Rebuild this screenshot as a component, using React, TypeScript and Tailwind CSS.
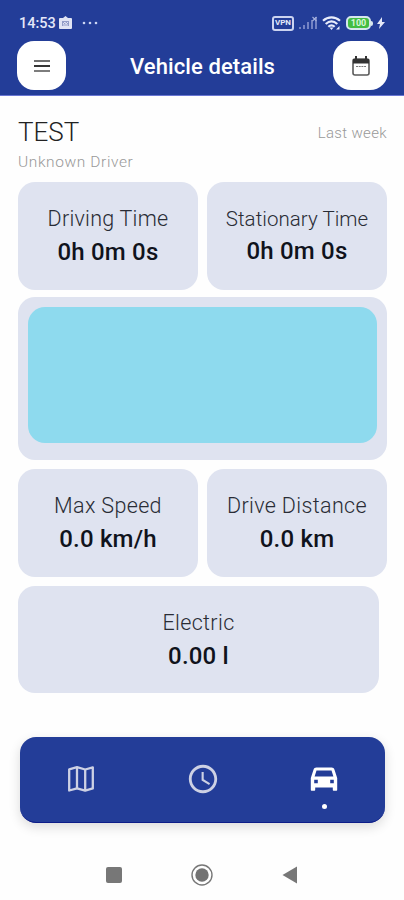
import type { ReactNode } from 'react'
import { MdAccessTime } from 'react-icons/md'

type StatCardProps = {
  label: string
  value: string
  labelClass?: string
  valueClass?: string
}

function StatCard({
  label,
  value,
  labelClass = 'text-[21.5px] tracking-[0.35px]',
  valueClass = 'mt-[1px]',
}: StatCardProps) {
  return (
    <div className="flex h-full flex-col items-center rounded-[17px] bg-[#dfe3f0] pt-[21px] whitespace-nowrap">
      <div className={`leading-[32px] font-light text-[#292c35] ${labelClass}`}>{label}</div>
      <div className={`text-[24px] leading-[33px] font-medium tracking-[0.2px] text-[#10131c] ${valueClass}`}>
        {value}
      </div>
    </div>
  )
}

function StatusBar() {
  return (
    <div className="flex h-[41px] items-center pt-[5px] pl-[19px] text-[#e4e8f8]">
      <span className="w-[39px] pt-[2px] text-[14.5px] leading-none font-medium">14:53</span>
      <svg width="15" height="14" viewBox="0 0 15 14">
        <path d="M2 2h3l2.5-2L10 2h3a1 1 0 0 1 1 1v9a1 1 0 0 1-1 1H2a1 1 0 0 1-1-1V3a1 1 0 0 1 1-1z" fill="#e0e4f4" />
        <path d="M4 5h7v5H4z" fill="#929dc8" />
        <path d="M5 8l2-2 1 2 2-2M5 9h5" stroke="#dfe3f4" fill="none" />
      </svg>
      <svg className="ml-[9px]" width="17" height="4" viewBox="0 0 17 4" fill="#ccd5f3">
        <circle cx="2" cy="2" r="1.3" />
        <circle cx="8" cy="2" r="1.3" />
        <circle cx="14" cy="2" r="1.3" />
      </svg>

      <div className="mr-[19px] ml-auto flex items-center">
        <div className="flex h-[15px] w-[22px] items-center justify-center rounded-[3px] border-2 border-[#cbd3f0] text-[8px] leading-none font-bold">
          VPN
        </div>
        <svg className="ml-[4px]" width="20" height="14" viewBox="0 0 20 14">
          <path d="M2 13v-2M6 13V9M10 13V6M14 13V4M18 13V1" stroke="#7483c4" strokeWidth="2" />
          <path d="M14.500 1l4 4M18.500 1l-4 4" stroke="#a4afdc" strokeWidth="1.100" />
        </svg>
        <svg className="ml-[4px]" width="19" height="15" viewBox="0 0 19 15">
          <g fill="none" stroke="#e8ecfb" strokeWidth="2.200">
            <path d="M1 4.800c5-4.600 12-4.600 17 0" />
            <path d="M3.700 8c3.600-3.300 8-3.300 11.600 0" />
            <path d="M6.300 10.800c2-1.800 4.400-1.800 6.400 0" />
          </g>
          <path d="M7.500 11.500h4l-2 2.500zM14 13.500l3.500-3.500v3.500z" fill="#e8ecfb" />
        </svg>
        <div className="ml-[5px] flex h-[14px] w-[25px] items-center justify-center rounded-[5px] border-2 border-[#d6e6ed] bg-[#43bd43] text-[9px] leading-none font-bold text-[#daf7da]">
          100
        </div>
        <div className="h-[5px] w-[2px] rounded-r-sm bg-[#d6e6ed]" />
        <svg className="ml-[4px]" width="8" height="12" viewBox="0 0 8 12">
          <path d="M5 0L0 7h3L2 12l6-7H5z" fill="#e4e8f8" />
        </svg>
      </div>
    </div>
  )
}

function Header() {
  return (
    <header className="h-[96px] border-b border-[#6976d3] bg-[#233d98]">
      <StatusBar />
      <div className="grid h-[49px] grid-cols-[55px_1fr_55px] items-center pr-[16px] pl-[17px]">
        <button className="flex h-[49px] w-[49px] items-center justify-center rounded-[17px] bg-white">
          <svg width="18" height="14" viewBox="0 0 18 14">
            <path d="M1 2h16" stroke="#555" strokeWidth="1.700" />
            <path d="M1 7h16" stroke="#111" strokeWidth="1.700" />
            <path d="M1 12h16" stroke="#666" strokeWidth="1.700" />
          </svg>
        </button>
        <h1 className="pt-[2px] text-center text-[22px] leading-[47px] font-medium tracking-[0.1px] whitespace-nowrap text-white">
          Vehicle details
        </h1>
        <button className="flex h-[49px] w-[55px] items-center justify-center rounded-[18px] bg-white">
          <svg className="mt-[1px]" width="18" height="20" viewBox="0 0 18 20">
            <rect x="1" y="3" width="16" height="16" rx="2" fill="#fff" stroke="#5a5a5a" strokeWidth="1.600" />
            <path d="M1 3h16v4.500H1z" fill="#333" />
            <path d="M4 0v4M14 0v4" stroke="#333" strokeWidth="2" />
            <path d="M4 10.500h10" stroke="#777" strokeWidth="1.200" strokeDasharray="2 .7" />
          </svg>
        </button>
      </div>
    </header>
  )
}

function MapIcon() {
  return (
    <svg width="34" height="34" viewBox="0 0 34 34" fill="none" stroke="currentColor" strokeWidth="2.300">
      <path d="M5.200 7.300L13 5.200l8.200 2.300 7.600-2.100v21l-7.600 2.200-8.200-2.300-7.800 2.200z" strokeLinejoin="round" />
      <path d="M13 5.200v21.100M21.200 7.500v21.100" />
    </svg>
  )
}

function CarIcon() {
  return (
    <svg width="34" height="34" viewBox="0 0 34 34" fill="currentColor">
      <path
        fillRule="evenodd"
        d="M9.400 5.600h15.200c1.400 0 2.500.8 2.900 2.100l2.700 8.200v11.900c0 .6-.4 1-1 1h-2.400c-.6 0-1-.4-1-1v-2.300H8.200v2.300c0 .6-.4 1-1 1H4.800c-.6 0-1-.4-1-1V15.900l2.700-8.200c.4-1.300 1.500-2.100 2.900-2.100zM9.500 8.500l-1.900 6h18.800l-1.900-6zM7.200 17.700v3.600h3.600v-3.600zM23.200 17.700v3.600h3.600v-3.600z"
      />
    </svg>
  )
}

function NavItem({ children, active = false }: { children: ReactNode; active?: boolean }) {
  return (
    <button className={`flex flex-1 flex-col items-center pt-[25px] ${active ? 'text-white' : 'text-[#cdd1e4]'}`}>
      {children}
      {active && <span className="mt-[8px] h-[5px] w-[5px] rounded-full bg-white" />}
    </button>
  )
}

export default function App() {
  return (
    <div className="flex h-[900px] w-[404px] flex-col overflow-hidden bg-[#fefefe] font-[Roboto,sans-serif]">
      <Header />

      <main className="h-[641px] pr-[17px] pl-[18px]">
        <div className="flex h-[86px] justify-between pt-[19px] whitespace-nowrap">
          <div>
            <div className="text-[26px] leading-[34px] font-light text-[#222]">TEST</div>
            <div className="pt-[1px] text-[15.5px] leading-[24px] font-light tracking-[0.6px] text-[#999]">
              Unknown Driver
            </div>
          </div>
          <div className="pt-[6px] text-[15px] leading-[24px] font-light tracking-[0.35px] text-[#999]">Last week</div>
        </div>

        <div className="grid h-[108px] grid-cols-2 gap-[9px]">
          <StatCard label="Driving Time" value="0h 0m 0s" labelClass="text-[21.5px] tracking-[0.25px]" />
          <StatCard
            label="Stationary Time"
            value="0h 0m 0s"
            labelClass="text-[20.5px] tracking-[0.05px]"
            valueClass=""
          />
        </div>

        <div className="mt-[7px] h-[163px] rounded-[17px] bg-[#dfe3f0] px-[10px] pt-[10px]">
          <div className="h-[136px] rounded-[17px] bg-[#8edaee]" />
        </div>

        <div className="mt-[9px] grid h-[108px] grid-cols-2 gap-[9px]">
          <StatCard label="Max Speed" value="0.0 km/h" />
          <StatCard label="Drive Distance" value="0.0 km" />
        </div>

        <div className="mt-[9px] mr-[8px] h-[107px]">
          <StatCard label="Electric" value="0.00 l" />
        </div>
      </main>

      <nav className="mr-[19px] ml-[20px] flex h-[86px] shrink-0 rounded-[16px] border-b border-[#0c1c88] bg-[#233d98] shadow-[0_4px_12px_rgba(0,0,0,0.14)]">
        <NavItem>
          <MapIcon />
        </NavItem>
        <NavItem>
          <MdAccessTime size={34} />
        </NavItem>
        <NavItem active>
          <CarIcon />
        </NavItem>
      </nav>

      {/* system navigation */}
      <div className="flex h-[77px] items-center justify-center gap-[69px] pt-[26px] pb-0">
        <div className="h-[16px] w-[16px] rounded-[2px] bg-[#777]" />
        <svg width="22" height="22" viewBox="0 0 22 22">
          <circle cx="11" cy="11" r="10" fill="none" stroke="#777" strokeWidth="1.400" />
          <circle cx="11" cy="11" r="6.700" fill="#737373" />
        </svg>
        <svg width="16" height="18" viewBox="0 0 16 18">
          <path d="M15 .5v17L.5 9z" fill="#777" />
        </svg>
      </div>
    </div>
  )
}
